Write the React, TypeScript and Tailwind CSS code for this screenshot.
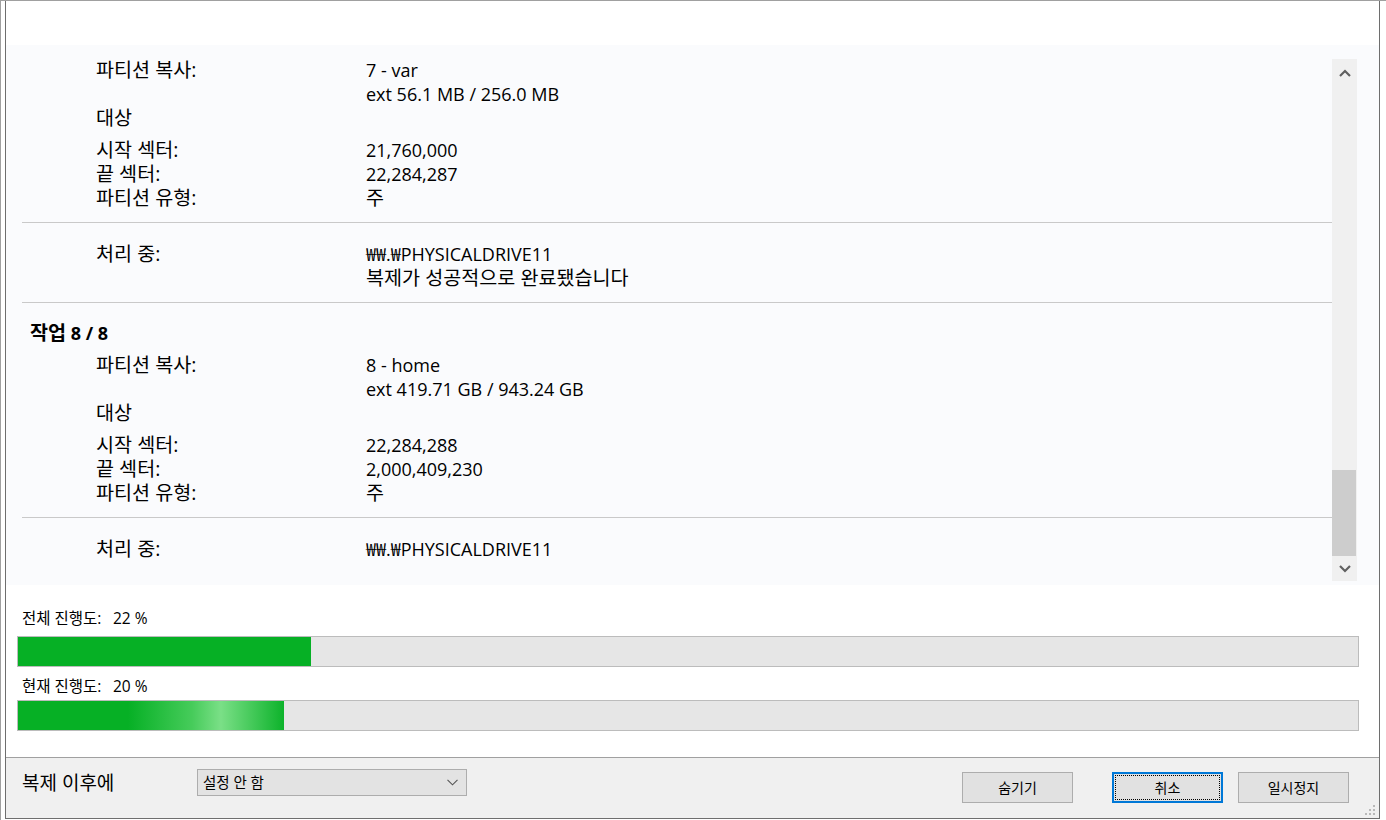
import React from 'react'

const font = "font-['Open_Sans','Noto_Sans_CJK_KR',sans-serif]"

interface Row {
  label?: string
  value?: string
  korean?: boolean
  gap?: boolean
}

function Rows({ rows }: { rows: Row[] }) {
  return (
    <div>
      {rows.map((row, i) => (
        <div key={i} className={`flex pl-[74px] h-6 leading-6 ${row.gap ? 'mt-2' : ''}`}>
          <div className="w-[270px] shrink-0 text-[19.6px]">{row.label}</div>
          <div className={row.korean ? 'text-[19.6px]' : ''}>{row.value}</div>
        </div>
      ))}
    </div>
  )
}

function Separator() {
  return <div className="h-px bg-[#c9c9c9]" />
}

function taskRows(part: string, ext: string, start: string, end: string): Row[] {
  return [
    { label: '파티션 복사:', value: part },
    { value: ext },
    { label: '대상' },
    { label: '시작 섹터:', value: start, gap: true },
    { label: '끝 섹터:', value: end },
    { label: '파티션 유형:', value: '주', korean: true },
  ]
}

function ScrollBar() {
  return (
    <div className="w-[25px] h-[522px] mt-[14px] bg-[#f0f0f0] flex flex-col shrink-0">
      <div className="h-[28px] flex items-center justify-center">
        <svg width="14" height="9" viewBox="0 0 14 9">
          <path d="M2 7 L7 2 L12 7" fill="none" stroke="#606060" strokeWidth="2.2" />
        </svg>
      </div>
      <div className="flex-1 flex flex-col justify-end">
        <div className="h-[86px] bg-[#cdcdcd] mr-px" />
      </div>
      <div className="h-[25px] flex items-center justify-center">
        <svg width="14" height="9" viewBox="0 0 14 9">
          <path d="M2 2 L7 7 L12 2" fill="none" stroke="#606060" strokeWidth="2.2" />
        </svg>
      </div>
    </div>
  )
}

function ProgressBar({ fill, glow }: { fill: number; glow?: boolean }) {
  return (
    <div className="h-[31px] border border-[#bcbcbc] bg-[#e6e6e6]">
      <div className="relative h-full bg-[#06b025] overflow-hidden" style={{ width: fill }}>
        {glow && (
          <div className="absolute top-0 bottom-0 left-[110px] w-[160px] bg-[linear-gradient(90deg,rgba(255,255,255,0)_0%,rgba(190,255,190,0.35)_40%,rgba(200,255,200,0.6)_58%,rgba(255,255,255,0)_100%)]" />
        )}
      </div>
    </div>
  )
}

function ProgressLabel({ label, value }: { label: string; value: string }) {
  return (
    <div className="h-5 leading-5 pl-[5px] flex">
      <span className="w-[91px] text-[15.5px]">{label}</span>
      <span className="text-[15.5px]">{value}</span>
    </div>
  )
}

export default function App() {
  return (
    <div className={`w-[1386px] h-[820px] bg-white border-t border-l border-[#a0a0a0] flex items-start text-black ${font}`}>
      <div className="w-[4px] shrink-0" />
      <div className="w-[1375px] h-[818px] shrink-0 flex flex-col border-l border-r border-b border-[#6e6e6e]">
        {/* top blank */}
        <div className="h-[44px] shrink-0" />

        {/* task list */}
        <div className="h-[540px] shrink-0 bg-[#fafbfd] flex items-start pl-[16px] pr-[22px] overflow-hidden text-[18px]">
          <div className="w-[1310px] shrink-0">
            <div className="pt-[13px] pb-[12px]">
              <Rows rows={taskRows('7 - var', 'ext 56.1 MB / 256.0 MB', '21,760,000', '22,284,287')} />
            </div>
            <Separator />
            <div className="pt-[19px] pb-[12px]">
              <Rows
                rows={[
                  { label: '처리 중:', value: '₩₩.₩PHYSICALDRIVE11' },
                  { value: '복제가 성공적으로 완료됐습니다', korean: true },
                ]}
              />
            </div>
            <Separator />
            <div className="pt-[18px] pb-[12px]">
              <div className="pl-2 h-6 leading-6 font-bold">
                <span className="text-[19.6px]">작업</span> 8 / 8
              </div>
              <div className="mt-2">
                <Rows rows={taskRows('8 - home', 'ext 419.71 GB / 943.24 GB', '22,284,288', '2,000,409,230')} />
              </div>
            </div>
            <Separator />
            <div className="pt-[19px]">
              <Rows rows={[{ label: '처리 중:', value: '₩₩.₩PHYSICALDRIVE11' }]} />
            </div>
          </div>
          <ScrollBar />
        </div>

        {/* progress */}
        <div className="h-[172px] shrink-0 pl-[11px] pr-[20px] pt-[23px]">
          <ProgressLabel label="전체 진행도:" value="22 %" />
          <div className="mt-[8px]">
            <ProgressBar fill={293} />
          </div>
          <div className="mt-[9px]">
            <ProgressLabel label="현재 진행도:" value="20 %" />
          </div>
          <div className="mt-[4px]">
            <ProgressBar fill={266} glow />
          </div>
        </div>

        {/* bottom bar */}
        <div className="relative flex-1 border-t border-[#a0a0a0] bg-[#f0f0f0] flex items-start pl-[16px] pr-[30px]">
          <div className="mt-[13px] h-6 leading-6 text-[19px] w-[175px]">복제 이후에</div>
          <div className="mt-[11px] w-[270px] h-[27px] border border-[#adadad] bg-[#e3e3e3] flex items-center justify-between pl-[5px] pr-[8px] text-[14.5px]">
            <span>설정 안 함</span>
            <svg width="11" height="7" viewBox="0 0 11 7">
              <path d="M0.5 0.8 L5.5 5.8 L10.5 0.8" fill="none" stroke="#555" strokeWidth="1.1" />
            </svg>
          </div>
          <div className="flex-1" />
          <div className="mt-[14px] flex text-[14px]">
            <button className="w-[111px] h-[31px] border border-[#adadad] bg-[#e1e1e1] flex items-center justify-center">
              숨기기
            </button>
            <button className="ml-[39px] w-[111px] h-[31px] border-2 border-[#0078d7] bg-[#e1e1e1] p-px">
              <div className="w-full h-full border border-dotted border-black flex items-center justify-center">
                취소
              </div>
            </button>
            <button className="ml-[15px] w-[111px] h-[31px] border border-[#adadad] bg-[#e1e1e1] flex items-center justify-center">
              일시정지
            </button>
          </div>
          <svg className="absolute right-[2px] bottom-[1px]" width="12" height="12" viewBox="0 0 12 12">
            <rect x="8" y="0" width="2" height="2" fill="#b9b9b9" />
            <rect x="4" y="4" width="2" height="2" fill="#b9b9b9" />
            <rect x="8" y="4" width="2" height="2" fill="#b9b9b9" />
            <rect x="0" y="8" width="2" height="2" fill="#b9b9b9" />
            <rect x="4" y="8" width="2" height="2" fill="#b9b9b9" />
            <rect x="8" y="8" width="2" height="2" fill="#b9b9b9" />
          </svg>
        </div>
      </div>
      <div className="w-[6px] shrink-0" />
    </div>
  )
}
